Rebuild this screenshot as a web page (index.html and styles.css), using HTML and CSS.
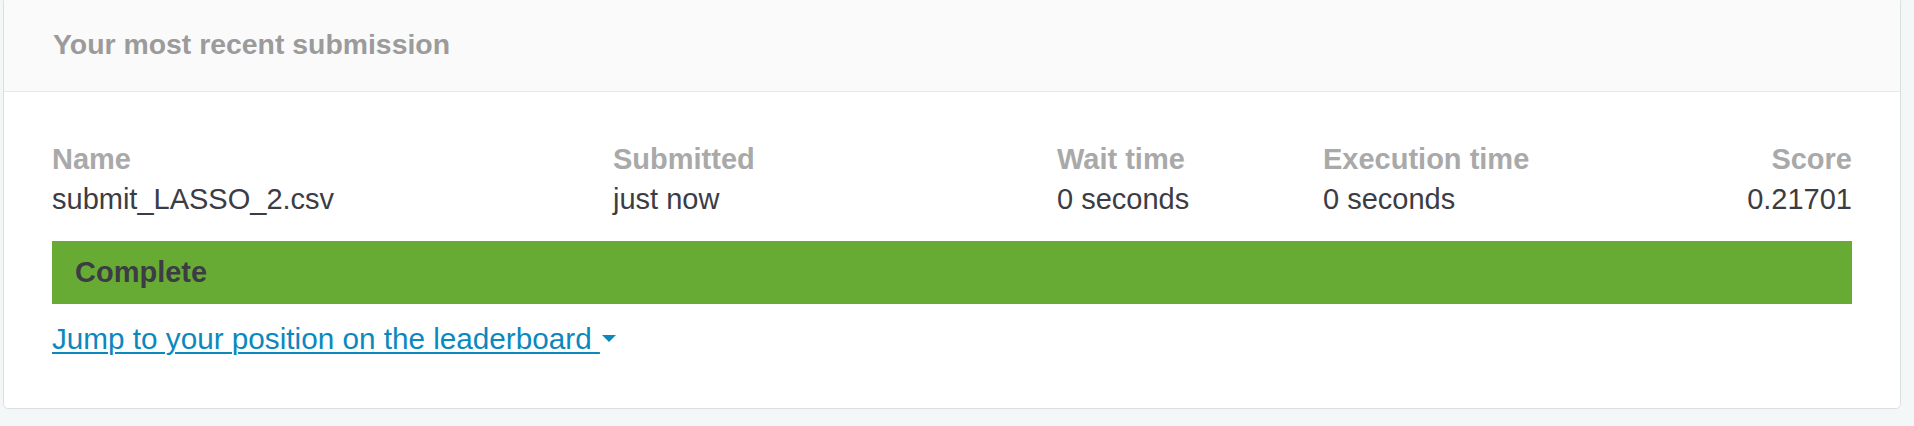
FILE: index.html
```html
<!DOCTYPE html>
<html>
<head>
<meta charset="utf-8">
<link rel="stylesheet" href="styles.css">
</head>
<body>
<div class="card">
  <div class="card-header">Your most recent submission</div>
  <div class="card-body">
    <div class="grid">
      <div class="col">
        <div class="label">Name</div>
        <div class="value">submit_LASSO_2.csv</div>
      </div>
      <div class="col">
        <div class="label">Submitted</div>
        <div class="value">just now</div>
      </div>
      <div class="col">
        <div class="label">Wait time</div>
        <div class="value">0 seconds</div>
      </div>
      <div class="col">
        <div class="label">Execution time</div>
        <div class="value">0 seconds</div>
      </div>
      <div class="col right">
        <div class="label">Score</div>
        <div class="value">0.21701</div>
      </div>
    </div>
    <div class="status">Complete</div>
    <div class="jump"><a class="jump-link" href="#">Jump to your position on the leaderboard </a><span class="caret"></span></div>
  </div>
</div>
</body>
</html>
```

FILE: styles.css
```css
html, body {
  margin: 0;
  padding: 0;
  background: #f4f7f8;
}
body {
  font-family: "Liberation Sans", Arial, sans-serif;
  font-size: 29px;
  line-height: 40px;
}
.card {
  margin: -3px 13px 0 3px;
  border: 1px solid #dcdee0;
  border-radius: 5px;
  background: #fff;
  overflow: hidden;
}
.card-header {
  background: #fafafa;
  border-bottom: 1px solid #e8e8e8;
  height: 94px;
  box-sizing: border-box;
  padding: 26px 49px 0;
  font-size: 28.4px;
  font-weight: bold;
  color: #9b9b9b;
}
.card-body {
  padding: 47px 48px 49px 48px;
}
.grid {
  display: grid;
  grid-template-columns: 561px 444px 266px auto 1fr;
}
.col.right {
  text-align: right;
}
.label {
  font-weight: bold;
  color: #a9a9a9;
}
.value {
  color: #3c3c44;
}
.status {
  margin-top: 22px;
  background: #68ab34;
  color: #3c3c44;
  font-weight: bold;
  height: 63px;
  box-sizing: border-box;
  padding: 11px 23px 0;
}
.jump {
  margin-top: 15px;
  display: flex;
  align-items: center;
}
.jump-link {
  color: #0b88bd;
  font-size: 29.7px;
  text-decoration: underline;
  text-decoration-thickness: 2px;
  text-underline-offset: 3px;
  white-space: pre;
}
.caret {
  display: inline-block;
  width: 0;
  height: 0;
  margin-left: 2px;
  margin-top: -2px;
  border-left: 7px solid transparent;
  border-right: 7px solid transparent;
  border-top: 7px solid #0b88bd;
}
```
